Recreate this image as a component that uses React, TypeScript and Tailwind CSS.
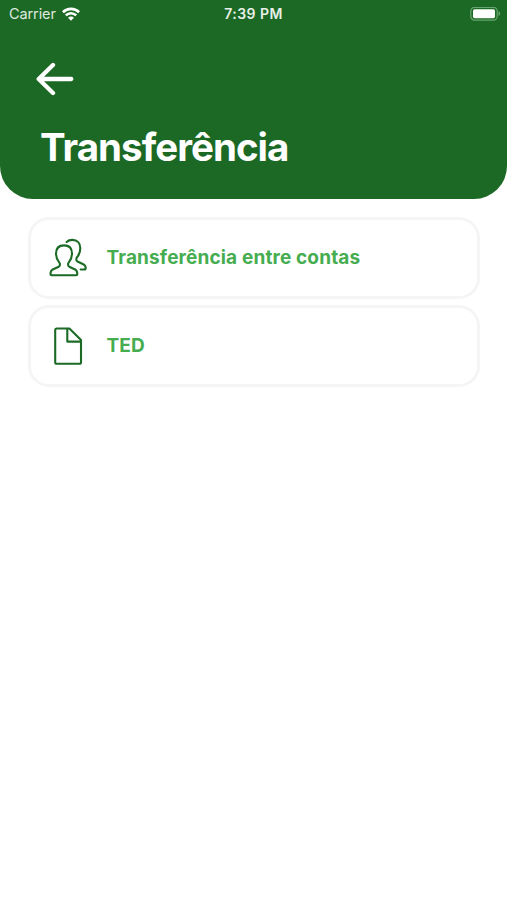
import type { ReactNode } from "react";

function StatusBar() {
  return (
    <div className="flex h-7 items-center justify-between pl-[9px] pr-[6px] text-white">
      <div className="flex w-[150px] items-center gap-[6px]">
        <span className="text-[14.5px] leading-7 tracking-[-0.1px] text-white/85">Carrier</span>
        <svg width="18" height="14" viewBox="0 0 18 14" fill="none" stroke="white" strokeWidth="2.7">
          <path d="M0.9 5.2C5.4 0.7 12.6 0.7 17.1 5.2" />
          <path d="M3.8 8.4C6.8 5.5 11.2 5.5 14.2 8.4" />
          <path d="M9 13.8 6 10.8C7.6 9.2 10.4 9.2 12 10.8Z" fill="white" stroke="none" />
        </svg>
      </div>
      <span className="-ml-[3px] text-[14px] font-semibold leading-7 tracking-[0.45px] text-white/90">7:39 PM</span>
      <div className="flex w-[150px] justify-end">
        <svg width="31" height="14" viewBox="0 0 31 14">
          <rect x="0.8" y="0.3" width="26.4" height="12.8" rx="3.8" fill="none" stroke="#69a570" strokeWidth="1.2" />
          <rect x="3" y="2.2" width="22" height="9" rx="1.6" fill="white" />
          <path d="M28.5 4.3C30.8 5.3 30.8 8.1 28.5 9.1Z" fill="#69a570" />
        </svg>
      </div>
    </div>
  );
}

function PeopleIcon() {
  return (
    <svg width="40" height="40" viewBox="0 0 40 40" fill="none" stroke="#1b6b26" strokeWidth="2.1" strokeLinecap="round" strokeLinejoin="round">
      <path d="M16 7.4C10.6 7.4 8 10.8 8 15.6C8 19 9.2 21.9 11.2 24.3C12.3 25.7 12.3 27.8 10.7 28.7L4.2 31.8C2.8 32.6 2.5 33.6 2.5 36.2C2.5 36.9 2.9 37.3 3.6 37.3H28.2C28.9 37.3 29.3 36.9 29.3 36.2C29.3 33.6 29 32.6 27.6 31.8L21.3 28.7C19.7 27.8 19.7 25.7 20.8 24.3C22.8 21.9 24 19 24 15.6C24 10.8 21.4 7.4 16 7.4Z" />
      <path d="M18.6 4C20 2.6 21.9 1.9 24.4 1.9C29.4 1.9 32.3 5.3 32.3 10.2C32.3 14 31.1 16.9 29.1 19.2C28 20.6 27.9 22.6 29.5 23.5L35.7 26.5C37.6 27.4 37.9 29 37.6 30.8C37.5 31.3 37.2 31.5 36.7 31.5H32.7" />
    </svg>
  );
}

function FileIcon() {
  return (
    <svg width="40" height="40" viewBox="0 0 40 40" fill="none" stroke="#1b6b26" strokeWidth="2.1" strokeLinejoin="round">
      <path d="M8.8 2.5H21.4L33 14V36.2C33 37.2 32.4 37.8 31.4 37.8H8.8C7.8 37.8 7.2 37.2 7.2 36.2V4.1C7.2 3.1 7.8 2.5 8.8 2.5Z" />
      <path d="M19.3 2.5V15.6H33" />
    </svg>
  );
}

function Option({ icon, label }: { icon: ReactNode; label: string }) {
  return (
    <button className="flex h-[82px] w-full items-center gap-[18.5px] rounded-[21px] border-[3px] border-[#f5f5f5] bg-white pl-[17px] text-left">
      {icon}
      <span className="text-[19px] font-bold leading-6 tracking-[0.15px] text-[#45ad50]">{label}</span>
    </button>
  );
}

export default function App() {
  return (
    <div className="min-h-[900px] w-full bg-white font-['Inter',sans-serif]">
      <header className="h-[199px] rounded-b-[33px] bg-[#1b6924]">
        <StatusBar />
        <button className="ml-[35px] mt-[34px] block h-[34px] w-[40px]" aria-label="Voltar">
          <svg width="40" height="34" viewBox="0 0 40 34" fill="none" stroke="white" strokeWidth="4.3" strokeLinecap="round" strokeLinejoin="round">
            <path d="M18 3 3.7 17 18 31M4 17H36.3" />
          </svg>
        </button>
        <h1 className="ml-[40px] mt-[27px] text-[38.5px] font-bold leading-[48px] tracking-[-0.97px] text-white">Transferência</h1>
      </header>
      <main className="flex flex-col gap-[6px] pl-[28px] pr-[27px] pt-[18px]">
        <Option icon={<PeopleIcon />} label="Transferência entre contas" />
        <Option icon={<FileIcon />} label="TED" />
      </main>
    </div>
  );
}
